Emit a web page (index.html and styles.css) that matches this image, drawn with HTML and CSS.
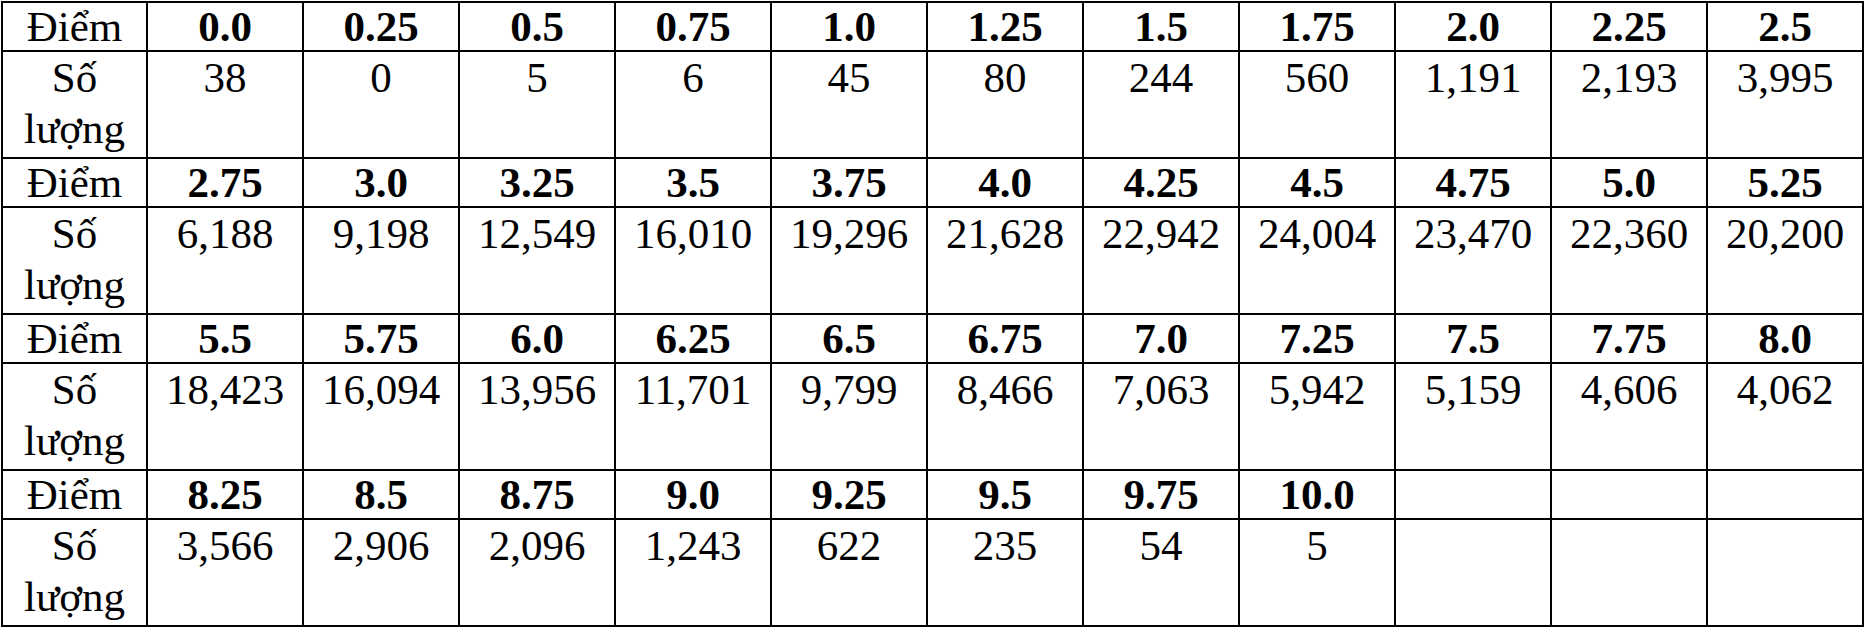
FILE: index.html
```html
<!DOCTYPE html>
<html lang="vi">
<head>
<meta charset="utf-8">
<title>Phổ điểm</title>
<link rel="stylesheet" href="styles.css">
</head>
<body>
<table class="score-table">
  <colgroup>
    <col class="c-label">
    <col span="11">
  </colgroup>
  <tbody>
    <tr class="r-score">
      <td>Điểm</td><td class="b">0.0</td><td class="b">0.25</td><td class="b">0.5</td><td class="b">0.75</td><td class="b">1.0</td><td class="b">1.25</td><td class="b">1.5</td><td class="b">1.75</td><td class="b">2.0</td><td class="b">2.25</td><td class="b">2.5</td>
    </tr>
    <tr class="r-count">
      <td>Số lượng</td><td>38</td><td>0</td><td>5</td><td>6</td><td>45</td><td>80</td><td>244</td><td>560</td><td>1,191</td><td>2,193</td><td>3,995</td>
    </tr>
    <tr class="r-score">
      <td>Điểm</td><td class="b">2.75</td><td class="b">3.0</td><td class="b">3.25</td><td class="b">3.5</td><td class="b">3.75</td><td class="b">4.0</td><td class="b">4.25</td><td class="b">4.5</td><td class="b">4.75</td><td class="b">5.0</td><td class="b">5.25</td>
    </tr>
    <tr class="r-count">
      <td>Số lượng</td><td>6,188</td><td>9,198</td><td>12,549</td><td>16,010</td><td>19,296</td><td>21,628</td><td>22,942</td><td>24,004</td><td>23,470</td><td>22,360</td><td>20,200</td>
    </tr>
    <tr class="r-score">
      <td>Điểm</td><td class="b">5.5</td><td class="b">5.75</td><td class="b">6.0</td><td class="b">6.25</td><td class="b">6.5</td><td class="b">6.75</td><td class="b">7.0</td><td class="b">7.25</td><td class="b">7.5</td><td class="b">7.75</td><td class="b">8.0</td>
    </tr>
    <tr class="r-count">
      <td>Số lượng</td><td>18,423</td><td>16,094</td><td>13,956</td><td>11,701</td><td>9,799</td><td>8,466</td><td>7,063</td><td>5,942</td><td>5,159</td><td>4,606</td><td>4,062</td>
    </tr>
    <tr class="r-score">
      <td>Điểm</td><td class="b">8.25</td><td class="b">8.5</td><td class="b">8.75</td><td class="b">9.0</td><td class="b">9.25</td><td class="b">9.5</td><td class="b">9.75</td><td class="b">10.0</td><td></td><td></td><td></td>
    </tr>
    <tr class="r-count">
      <td>Số lượng</td><td>3,566</td><td>2,906</td><td>2,096</td><td>1,243</td><td>622</td><td>235</td><td>54</td><td>5</td><td></td><td></td><td></td>
    </tr>
  </tbody>
</table>
</body>
</html>
```

FILE: styles.css
```css
html, body {
  margin: 0;
  padding: 0;
  background: #ffffff;
}

body {
  padding: 1px 0 0 1px;
  font-family: "Liberation Serif", "Times New Roman", serif;
  color: #000000;
}

.score-table {
  border-collapse: collapse;
  table-layout: fixed;
  width: 1863px;
  font-size: 43px;
}

.c-label {
  width: 145px;
}

.score-table td {
  border: 2.5px solid #000000;
  padding: 0 2px;
  text-align: center;
  white-space: normal;
}

.r-score td {
  height: 47px;
  line-height: 46px;
  vertical-align: middle;
}

.r-count td {
  height: 107px;
  line-height: 51px;
  vertical-align: top;
  padding-top: 0;
  box-sizing: border-box;
}

.b {
  font-weight: bold;
}
```
